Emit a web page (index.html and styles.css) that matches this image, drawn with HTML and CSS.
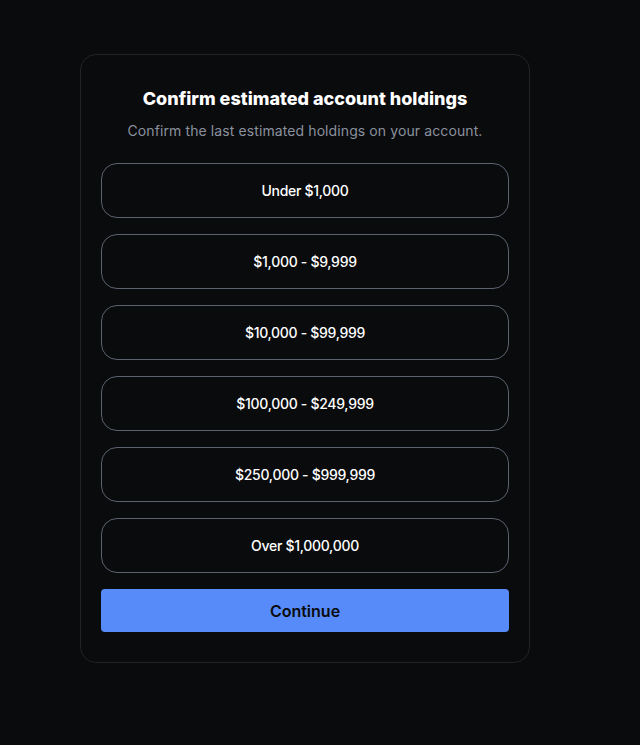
FILE: index.html
```html
<!DOCTYPE html>
<html>
<head>
<meta charset="utf-8">
<link rel="stylesheet" href="styles.css">
</head>
<body>
<main class="page">
  <section class="card">
    <h1 class="title">Confirm estimated account holdings</h1>
    <p class="subtitle">Confirm the last estimated holdings on your account.</p>
    <div class="options">
      <button class="option">Under $1,000</button>
      <button class="option">$1,000 - $9,999</button>
      <button class="option">$10,000 - $99,999</button>
      <button class="option">$100,000 - $249,999</button>
      <button class="option">$250,000 - $999,999</button>
      <button class="option">Over $1,000,000</button>
      <button class="continue">Continue</button>
    </div>
  </section>
</main>
</body>
</html>
```
FILE: styles.css
```css
html, body {
  margin: 0;
  padding: 0;
  background: #0a0b0d;
  font-family: Inter, "Noto Sans", sans-serif;
}
.page {
  padding: 54px 0 0 80px;
}
.card {
  box-sizing: border-box;
  width: 450px;
  border: 1px solid #212327;
  border-radius: 16px;
  background: #0a0b0d;
  padding: 32px 20px 30px;
  display: flex;
  flex-direction: column;
  align-items: stretch;
}
.title {
  margin: 0;
  text-align: center;
  color: #ffffff;
  font-size: 18px;
  line-height: 24px;
  font-weight: 800;
  letter-spacing: 0;
}
.subtitle {
  margin: 10px 0 0;
  text-align: center;
  color: #8a919e;
  font-size: 14px;
  line-height: 20px;
  letter-spacing: 0.1px;
}
.options {
  margin-top: 22px;
  display: flex;
  flex-direction: column;
  gap: 16px;
}
.option {
  height: 55px;
  border: 1px solid #5b616e;
  border-radius: 16px;
  background: #0a0b0d;
  color: #ffffff;
  font-family: Inter, "Noto Sans", sans-serif;
  font-size: 14px;
  font-weight: 500;
  letter-spacing: -0.3px;
}
.continue {
  height: 43px;
  border: none;
  border-radius: 4px;
  background: #578bfa;
  color: #0a0b0d;
  font-family: Inter, "Noto Sans", sans-serif;
  font-size: 16px;
  font-weight: 600;
}
```
